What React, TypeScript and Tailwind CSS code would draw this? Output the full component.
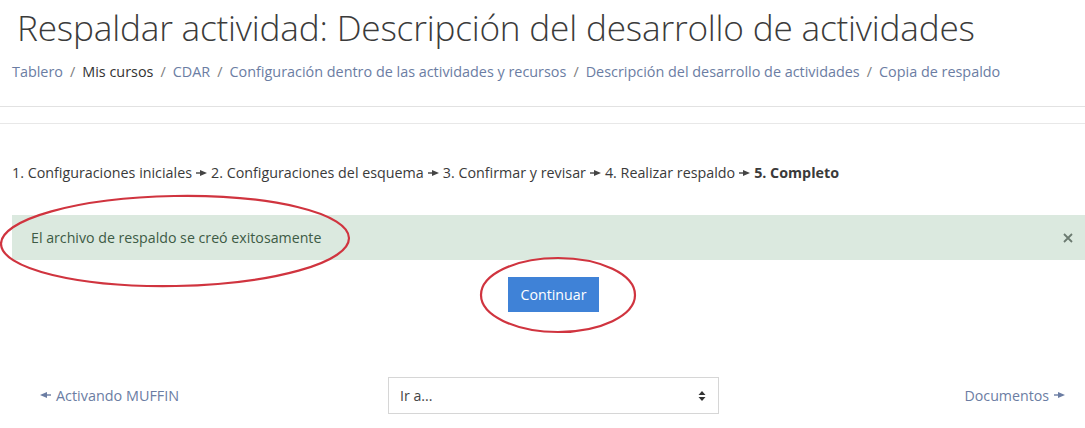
import React from "react";

function Arrow({ dir = "right", className = "" }: { dir?: "right" | "left"; className?: string }) {
  return (
    <svg
      width="11"
      height="6"
      viewBox="0 0 11 6"
      className={className}
      style={{ transform: dir === "left" ? "scaleX(-1)" : undefined }}
    >
      <rect x="0" y="2.3" width="6" height="1.4" fill="currentColor" />
      <path d="M4 0 L11 3 L4 6 Z" fill="currentColor" />
    </svg>
  );
}

function Sep() {
  return <span className="mx-[7px] text-[#7d7d7d]">/</span>;
}

export default function App() {
  const font = { fontFamily: '"Open Sans", "Noto Sans", sans-serif' };
  return (
    <div className="relative w-[1085px] h-[428px] bg-white overflow-hidden text-[#333]" style={font}>
      <h1 className="pl-[17px] pt-[3px] text-[35.2px] font-light leading-[48px] text-[#3b3b3b] tracking-[-0.2px] whitespace-nowrap">
        Respaldar actividad: Descripción del desarrollo de actividades
      </h1>
      <nav className="pl-[12px] mt-[11px] text-[14.4px] leading-[20px] text-[#6b7da3] whitespace-nowrap">
        <span>Tablero</span>
        <Sep />
        <span className="text-[#333]">Mis cursos</span>
        <Sep />
        <span>CDAR</span>
        <Sep />
        <span>Configuración dentro de las actividades y recursos</span>
        <Sep />
        <span>Descripción del desarrollo de actividades</span>
        <Sep />
        <span>Copia de respaldo</span>
      </nav>
      <div className="mt-[24px] border-t border-[#e2e2e2]" />
      <div className="mt-[16px] border-t border-[#e8e8e8]" />
      <div className="pl-[12px] mt-[39px] text-[14.3px] leading-[20px] text-[#3a3a3a] whitespace-nowrap flex items-center">
        <span>1. Configuraciones iniciales</span>
        <Arrow className="mx-[4px] text-[#444]" />
        <span>2. Configuraciones del esquema</span>
        <Arrow className="mx-[4px] text-[#444]" />
        <span>3. Confirmar y revisar</span>
        <Arrow className="mx-[4px] text-[#444]" />
        <span>4. Realizar respaldo</span>
        <Arrow className="mx-[4px] text-[#444]" />
        <span className="font-bold">5. Completo</span>
      </div>
      <div className="ml-[12px] mt-[32px] h-[45px] bg-[#dbe9df] flex items-center justify-between pl-[19px] pr-[12px]">
        <span className="text-[14.2px] text-[#3d5b45]">El archivo de respaldo se creó exitosamente</span>
        <svg width="10" height="10" viewBox="0 0 10 10" className="text-[#6b7a70]">
          <path d="M1 1 L9 9 M9 1 L1 9" stroke="currentColor" strokeWidth="1.8" />
        </svg>
      </div>
      <div className="flex justify-center mt-[17px] pl-[22px]">
        <button className="w-[91px] h-[35px] bg-[#3f82d7] text-white text-[14.2px]">Continuar</button>
      </div>
      <div className="mt-[65px] flex items-center pl-[40px] pr-[20px]">
        <span className="w-[348px] flex items-center gap-[5px] text-[14.4px] text-[#6b7da3]">
          <Arrow dir="left" />
          Activando MUFFIN
        </span>
        <div className="w-[331px] h-[37px] border border-[#d6d6d6] flex items-center justify-between pl-[11px] pr-[12px] text-[14.2px] text-[#444]">
          <span>Ir a...</span>
          <svg width="8" height="12" viewBox="0 0 8 12" className="text-[#333]">
            <path d="M0.5 5 L4 1 L7.5 5 Z M0.5 7 L4 11 L7.5 7 Z" fill="currentColor" />
          </svg>
        </div>
        <span className="flex-1 flex items-center justify-end gap-[5px] text-[14.2px] text-[#6b7da3]">
          Documentos
          <Arrow />
        </span>
      </div>
      <svg className="absolute left-0 top-0 pointer-events-none" width="1085" height="428">
        <ellipse cx="175" cy="241" rx="174" ry="45" fill="none" stroke="#d0343f" strokeWidth="2.2" transform="rotate(-1 175 241)" />
        <ellipse cx="558" cy="295" rx="77" ry="37" fill="none" stroke="#d0343f" strokeWidth="2.2" />
      </svg>
    </div>
  );
}
